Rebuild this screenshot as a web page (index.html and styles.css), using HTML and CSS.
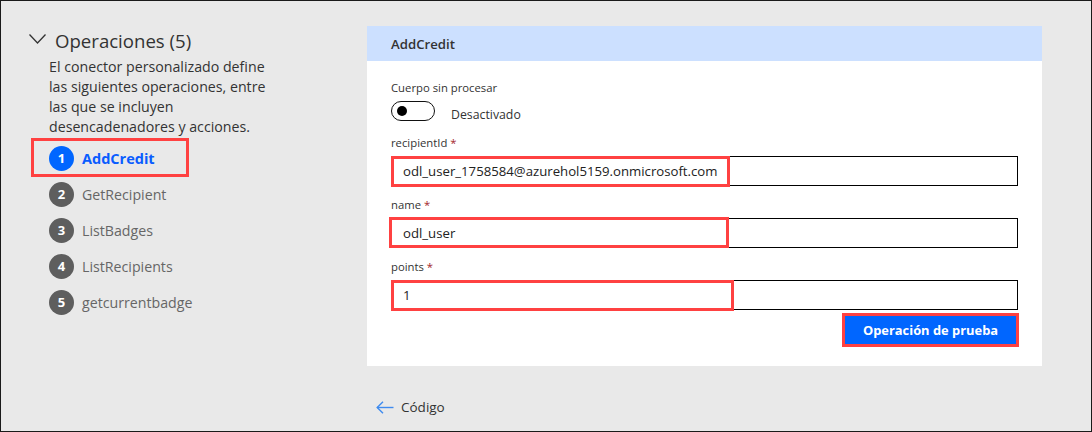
FILE: index.html
```html
<!DOCTYPE html>
<html lang="es">
<head>
<meta charset="utf-8">
<title>Operaciones</title>
<link rel="stylesheet" href="styles.css">
</head>
<body>
<div class="frame">
  <aside class="side">
    <div class="side-title">
      <svg class="chev" width="17" height="10" viewBox="0 0 17 10"><polyline points="0.5,0.5 8.5,9 16.5,0.5" fill="none" stroke="#333" stroke-width="1.3"/></svg>
      <span>Operaciones (5)</span>
    </div>
    <p class="side-desc">El conector personalizado define<br>las siguientes operaciones, entre<br>las que se incluyen<br>desencadenadores y acciones.</p>
    <ul class="ops">
      <li class="op active"><span class="num">1</span><span class="op-name">AddCredit</span><span class="mark mark-op"></span></li>
      <li class="op"><span class="num">2</span><span class="op-name">GetRecipient</span></li>
      <li class="op"><span class="num">3</span><span class="op-name">ListBadges</span></li>
      <li class="op"><span class="num">4</span><span class="op-name">ListRecipients</span></li>
      <li class="op"><span class="num">5</span><span class="op-name">getcurrentbadge</span></li>
    </ul>
  </aside>
  <main class="main">
    <section class="card">
      <header class="card-head">AddCredit</header>
      <div class="card-body">
        <div class="label">Cuerpo sin procesar</div>
        <div class="toggle-row">
          <span class="toggle"><span class="knob"></span></span>
          <span class="toggle-text">Desactivado</span>
        </div>
        <div class="label field-label">recipientId <span class="req">*</span></div>
        <div class="input">odl_user_1758584@azurehol5159.onmicrosoft.com<span class="mark mark-1"></span></div>
        <div class="label field-label">name <span class="req">*</span></div>
        <div class="input">odl_user<span class="mark mark-2"></span></div>
        <div class="label field-label">points <span class="req">*</span></div>
        <div class="input">1<span class="mark mark-3"></span></div>
        <div class="actions">
          <button class="btn">Operación de prueba</button>
        </div>
      </div>
    </section>
    <a class="back">
      <svg width="18" height="13" viewBox="0 0 18 13"><line x1="1" y1="6.5" x2="17.5" y2="6.5" stroke="#3f8bef" stroke-width="1.4"/><polyline points="7,0.8 1.2,6.5 7,12.2" fill="none" stroke="#3f8bef" stroke-width="1.4"/></svg>
      <span>Código</span>
    </a>
  </main>
</div>
</body>
</html>
```
FILE: styles.css
```css
* { box-sizing: border-box; }
html, body { margin: 0; padding: 0; }
body {
  font-family: "Open Sans", "Noto Sans", sans-serif;
  color: #333;
  background: #e9e9e9;
}
.frame {
  width: 1092px;
  height: 432px;
  border: 1px solid #1a1a1a;
  background: #e9e9e9;
  display: flex;
  padding-top: 25px;
}
.side {
  width: 366px;
  padding-left: 48px;
}
.side-title {
  display: flex;
  align-items: center;
  gap: 9px;
  margin-left: -20px;
  height: 28px;
  font-size: 18.6px;
  color: #333;
}
.chev { margin-top: -2px; }
.side-desc {
  margin: 3px 0 0;
  white-space: nowrap;
  font-size: 14.2px;
  line-height: 20px;
  color: #333;
}
.ops {
  list-style: none;
  margin: 3px 0 0;
  padding: 0;
}
.op {
  position: relative;
  display: flex;
  align-items: center;
  gap: 8px;
  height: 36px;
  font-size: 14.2px;
  color: #666;
}
.num {
  width: 25px;
  height: 25px;
  border-radius: 50%;
  background: #5e5e5e;
  color: #fff;
  font-size: 13px;
  font-weight: 700;
  display: flex;
  align-items: center;
  justify-content: center;
}
.op.active .num { background: #0066ff; }
.op.active .op-name {
  color: #0a5cff;
  font-weight: 700;
  font-size: 14.5px;
}
.mark {
  position: absolute;
  border: 3px solid #ff4141;
  pointer-events: none;
}
.mark-op {
  left: -18px;
  top: -2px;
  width: 158px;
  height: 39px;
}
.main {
  width: 675px;
  display: flex;
  flex-direction: column;
}
.card {
  background: #fff;
  height: 340px;
}
.card-head {
  height: 35px;
  background: #cce0ff;
  padding-left: 24px;
  display: flex;
  align-items: center;
  font-size: 13.2px;
  font-weight: 600;
  color: #333;
}
.card-body {
  padding: 19px 24px 0 24px;
}
.label {
  font-size: 11.3px;
  line-height: 16px;
  color: #333;
}
.req { color: #a4262c; }
.toggle-row {
  display: flex;
  align-items: center;
  gap: 16px;
  margin-top: 5px;
  height: 20px;
}
.toggle {
  width: 44px;
  height: 20px;
  border: 1.5px solid #111;
  border-radius: 10px;
  display: flex;
  align-items: center;
  padding-left: 5px;
}
.knob {
  width: 10px;
  height: 10px;
  border-radius: 50%;
  background: #000;
}
.toggle-text {
  font-size: 12.3px;
  margin-top: 6px;
}
.field-label { margin-top: 14px; }
.input + .field-label { margin-top: 11px; }
.input {
  position: relative;
  margin-top: 5px;
  height: 30px;
  border: 1px solid #000;
  padding-left: 11px;
  display: flex;
  align-items: center;
  font-size: 13.2px;
  color: #222;
}
.mark-1 { left: -1px; top: -1px; width: 339px; height: 31px; }
.mark-2 { left: -3px; top: -2px; width: 340px; height: 31px; }
.mark-3 { left: -1px; top: -1px; width: 343px; height: 31px; }
.actions {
  display: flex;
  justify-content: flex-end;
  padding-right: 2px;
  margin-top: 3px;
}
.btn {
  width: 171px;
  height: 28px;
  border: 0;
  background: #0066ff;
  color: #fff;
  font-family: "Open Sans", "Noto Sans", sans-serif;
  font-size: 12.9px;
  font-weight: 700;
  outline: 3px solid #ff4141;
  margin-top: 3px;
}
.back {
  display: flex;
  align-items: center;
  gap: 7px;
  margin-top: 31px;
  padding-left: 9px;
  font-size: 13.5px;
  line-height: 20px;
  color: #333;
}
```
